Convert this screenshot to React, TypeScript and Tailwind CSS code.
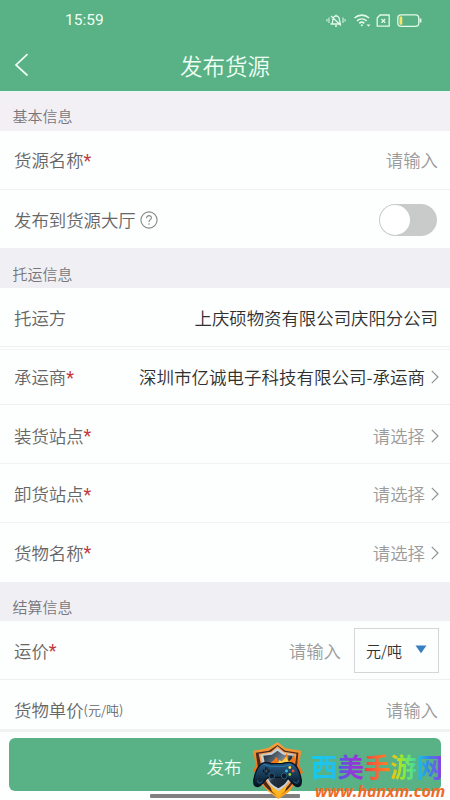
import type { ReactNode } from "react";

function Chevron() {
  return (
    <svg className="ml-[6px] mr-[-1px] h-[14px] w-[8px] shrink-0" viewBox="0 0 8 14" fill="none" stroke="#929292" strokeWidth="1.2">
      <path d="M.8.8 7 7 .8 13.2" />
    </svg>
  );
}

function Section({ title, className }: { title: string; className: string }) {
  return (
    <div className={`flex shrink-0 items-center pl-[12.5px] text-[15px] leading-none text-[#77777b] ${className}`}>
      {title}
    </div>
  );
}

function Row({ label, required, hint, className, children }: {
  label: string;
  required?: boolean;
  hint?: ReactNode;
  className: string;
  children: ReactNode;
}) {
  return (
    <div className={`flex shrink-0 items-center justify-between pl-[14px] pr-[12px] ${className}`}>
      <div className="flex items-center whitespace-nowrap text-[17.4px] leading-none text-[#666]">
        <span>{label}</span>
        {required && <span className="h-[17px] font-['Roboto',sans-serif] text-[18px] font-normal leading-[17px] text-[#c23a3d]">*</span>}
        {hint}
      </div>
      <div className="flex items-center whitespace-nowrap text-[17.4px] leading-none text-[#9b9b9b]">{children}</div>
    </div>
  );
}

function StatusIcons() {
  return (
    <svg className="absolute left-[325px] top-[12px] h-[17px] w-[98px]" viewBox="325 12 98 17" fill="none" stroke="#e2faea" strokeWidth="1.3">
      <path d="M330.5 24h10.5M332 23.5c1-1.5.5-4 1.3-5.7 1.2-2.4 4.5-2.4 5.7 0 .8 1.7.3 4.2 1.4 5.7M331 16l10 9.5M335 26h2M336 14.7v1" />
      <path d="M329 17.5v5.5M327 19v2.5M343 17.5v5.5M345 19v2.5" strokeWidth="1" />
      <path d="M354.5 18c4.2-3.8 10.4-3.8 14.6 0M357 20.8c2.8-2.5 6.8-2.5 9.6 0M359.3 23.3c1.4-1.3 3.6-1.3 5 0" strokeWidth="1.6" />
      <circle cx="361.8" cy="25.3" r="1" fill="#e2faea" stroke="none" />
      <path d="M366.5 24.5h4l-2 2.3z" fill="#e2faea" stroke="none" />
      <path d="M380 15h9.2v11.2h-12V18z" strokeLinejoin="round" />
      <path d="m381.5 19 3.7 3.7m0-3.7-3.7 3.7" />
      <rect x="397.8" y="14.8" width="21" height="11.6" rx="3.3" />
      <path d="M420.5 18.5v4" strokeWidth="1.8" />
      <rect x="399.5" y="16.5" width="2.8" height="8.2" rx="1" fill="#f5e66a" stroke="none" />
    </svg>
  );
}

function Shield() {
  return (
    <svg className="absolute left-[252px] top-[742px] h-[57px] w-[52px]" viewBox="0 0 55 58" preserveAspectRatio="none">
      <defs>
        <linearGradient id="fire" x1="0" y1="0" x2="0" y2="1">
          <stop stopColor="#f7a23c" />
          <stop offset=".5" stopColor="#ed7219" />
          <stop offset="1" stopColor="#ffab24" />
        </linearGradient>
        <linearGradient id="steel" x1="0" y1="0" x2="1" y2="1">
          <stop stopColor="#17212d" />
          <stop offset=".45" stopColor="#768795" />
          <stop offset=".55" stopColor="#233343" />
          <stop offset="1" stopColor="#101824" />
        </linearGradient>
        <linearGradient id="pad" x1="0" y1="0" x2="0" y2="1">
          <stop stopColor="#285f8b" />
          <stop offset=".55" stopColor="#153752" />
          <stop offset="1" stopColor="#07111f" />
        </linearGradient>
      </defs>
      <path d="M27 0 35 6 52 9 50 24 54 31 50 34 51 41 44 44 39 51 28 58 17 50 11 44 5 42 7 34 1 29 4 24 1 9 17 6z" fill="url(#fire)" />
      <path d="m27 3 8 6 14 2-2 20c-2 11-9 19-19 24C17 50 9 42 7 31L4 11l14-2z" fill="#4b2820" />
      <path d="m27 4 7 6 13 2-3 22c-2 8-8 14-16 18-8-4-13-10-16-18L7 12l13-2z" fill="#f0a05a" />
      <path d="m27 6 7 5 11 2-3 20c-2 8-7 13-14 17-8-4-12-9-14-17L9 13l11-2z" fill="#c9d0d4" />
      <path d="m27 9 6 4 10 1-3 20c-2 6-6 10-12 13-7-3-11-8-12-13l-4-20 9-1z" fill="url(#steel)" />
      <path d="M20 24c-1-5 5-5 5-9 4 3 2 5 5 6 2-4 7-5 6-10 4 4 1 6 3 9 2-2 5-4 5-8 4 8-1 11-1 17z" fill="#f47614" />
      <path d="M25 25c1-4 4-4 4-7 2 2 3 2 4 0 2-1 3-2 3-4 2 5 2 6 5 6 1 4 1 5-2 6z" fill="#ffd24a" />
      <path d="M13 21c4-1 7 2 9 1h9c3 0 6-2 10-1 5 1 9 7 11 17 1 7-3 9-7 6-4-3-5-7-9-8H18c-4 1-5 5-9 8-4 3-8 1-7-6C4 28 8 22 13 21z" fill="url(#pad)" stroke="#081421" strokeWidth="1.4" />
      <path d="M12 23c4 0 6 2 10 2h10c4 0 6-2 10-2M6 39c0 4 3 3 5 1M49 39c0 4-3 3-5 1" fill="none" stroke="#2d85b8" strokeWidth=".8" />
      <path d="M15 26v7M11.5 29.5h7" stroke="#07101a" strokeWidth="2.4" />
      <path d="M15 27v5M12.5 29.5h5" stroke="#58758a" strokeWidth=".7" />
      <circle cx="21" cy="34.5" r="3" fill="#0b1b2a" stroke="#397596" strokeWidth=".7" />
      <circle cx="34" cy="34.5" r="3" fill="#0b1b2a" stroke="#397596" strokeWidth=".7" />
      <circle cx="40" cy="26" r="1.5" fill="#ffd84e" />
      <circle cx="43.5" cy="29.5" r="1.5" fill="#f34b32" />
      <circle cx="36.5" cy="29.5" r="1.5" fill="#38bfe4" />
      <circle cx="40" cy="33" r="1.5" fill="#9bce3e" />
      <path d="m19 44 9 6 9-6-2 6-7 6-7-6z" fill="#ffb51e" />
    </svg>
  );
}

export default function App() {
  return (
    <div className="relative flex h-[800px] w-[450px] flex-col overflow-hidden bg-[#fdfefe] font-['Noto_Sans_CJK_SC',sans-serif] font-[350]">
      <header className="flex h-[91px] shrink-0 flex-col bg-[#59b186] text-[#effff4]">
        <div className="flex h-[41px] items-center pl-[65px] font-['Roboto','Noto_Sans_CJK_SC',sans-serif] text-[15.5px] font-normal leading-none">15:59</div>
        <div className="flex h-[48px] items-center">
          <svg className="ml-[14px] h-[24px] w-[15px]" viewBox="0 0 15 24" fill="none" stroke="#effff4" strokeWidth="1.7">
            <path d="M13.5 1.2 2 12l11.5 10.5" />
          </svg>
          <h1 className="w-[392px] text-center text-[22.5px] font-[350] leading-none">发布货源</h1>
        </div>
      </header>
      <StatusIcons />
      <main className="flex h-[638px] shrink-0 flex-col overflow-hidden">
        <Section title="基本信息" className="h-[40px] border-t border-[#e5f7ef] bg-[#f2eff5] pt-[7px]" />
        <Row label="货源名称" required className="h-[59px] border-b border-[#f1f1f4]">请输入</Row>
        <Row
          label="发布到货源大厅"
          className="h-[58px] pt-[2px]"
          hint={
            <svg className="ml-[4px] h-[18px] w-[18px]" viewBox="0 0 18 18" fill="none" stroke="#888" strokeWidth="1.1">
              <circle cx="9" cy="9" r="8.1" />
              <path d="M6.6 7.2c0-3.5 5-3.2 4.8-.2-.1 1.7-2.4 1.8-2.4 4M9 12.2v1.5" />
            </svg>
          }
        >
          <button role="switch" aria-checked="false" aria-label="发布到货源大厅" className="mr-px flex h-[32px] w-[58px] items-center rounded-full bg-[#c9caca] pl-px">
            <span className="h-[30px] w-[30px] rounded-full bg-white" />
          </button>
        </Row>
        <Section title="托运信息" className="h-[40px] bg-[#f0eff4] pt-[10px]" />
        <Row label="托运方" className="h-[59px] border-b border-[#eeefef] pt-[2px]">
          <span className="text-[#303030]">上庆硕物资有限公司庆阳分公司</span>
        </Row>
        <div className="mt-[2px] h-px shrink-0 bg-[#f3f4f4]" />
        <Row label="承运商" required className="h-[55px] border-b border-[#eeefef]">
          <span className="text-[17.5px] text-[#303030]">深圳市亿诚电子科技有限公司-承运商</span><Chevron />
        </Row>
        <Row label="装货站点" required className="h-[59px] border-b border-[#f1f2f2] pt-[3px]">请选择<Chevron /></Row>
        <Row label="卸货站点" required className="h-[59px] border-b border-[#f1f2f2] pt-[2px]">请选择<Chevron /></Row>
        <Row label="货物名称" required className="h-[59px]">请选择<Chevron /></Row>
        <Section title="结算信息" className="h-[39px] bg-[#f0eff4] pt-[10px]" />
        <Row label="运价" required className="h-[59px] border-b border-[#eeefef] pt-px">
          <span>请输入</span>
          <button className="ml-[13px] mr-[-1px] flex h-[45px] w-[85px] items-center justify-between border border-[#d5d5d7] pl-[11px] pr-[11px] text-[15px] leading-none text-[#303030]">
            元/吨
            <svg className="mb-[2px] h-[9px] w-[12px]" viewBox="0 0 12 9"><path d="M.5.5h11L6 8.2z" fill="#367fc0" /></svg>
          </button>
        </Row>
        <Row label="货物单价" hint={<span className="text-[13px]">(元/吨)</span>} className="h-[59px]">请输入</Row>
      </main>
      <footer className="flex h-[71px] shrink-0 flex-col border-t-[3px] border-[#f1f2f2] px-[9px] pt-[6px]">
        <button className="h-[53px] w-full shrink-0 rounded-[6px] bg-[#59b186] pr-[2px] pt-[5px] text-[17.6px] font-[350] leading-none text-[#effff4]">发布</button>
        <div className="ml-[141px] mt-[3px] h-[4px] w-[150px] shrink-0 rounded-[1px] bg-[#817f80]" />
      </footer>
      <Shield />
      <div className="absolute left-[311px] top-[751px] flex whitespace-nowrap text-[26.4px] font-bold leading-[30px]">
        <span className="bg-gradient-to-r from-[#0dccf2] to-[#27bce8] bg-clip-text text-transparent">西</span>
        <span className="bg-gradient-to-r from-[#315be8] via-[#8c3cda] to-[#a12cd8] bg-clip-text text-transparent">美</span>
        <span className="bg-gradient-to-r from-[#ef3e43] to-[#ff8616] bg-clip-text text-transparent">手</span>
        <span className="bg-gradient-to-r from-[#ffb600] via-[#82ed31] to-[#34d5a6] bg-clip-text text-transparent">游</span>
        <span className="bg-gradient-to-r from-[#13c7e8] via-[#377be9] to-[#8e23e8] bg-clip-text text-transparent">网</span>
      </div>
      <div className="absolute left-[315px] top-[783px] whitespace-nowrap font-['Open_Sans',sans-serif] text-[16px] font-bold italic leading-[16px] text-[#f06b26]">www.hanxm.com</div>
    </div>
  );
}
